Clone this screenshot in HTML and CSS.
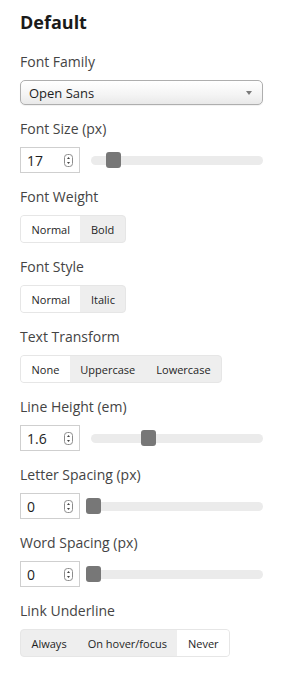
FILE: index.html
```html
<!DOCTYPE html>
<html>
<head>
<meta charset="utf-8">
<link rel="stylesheet" href="styles.css">
</head>
<body>
<h1 class="title">Default</h1>

<div class="field">
  <label class="label">Font Family</label>
  <div class="select">
    <span class="select-text">Open Sans</span>
    <svg class="select-arrow" width="6" height="4" viewBox="0 0 6 4"><path d="M0 0H6L3 4Z" fill="#7a7a7a"/></svg>
  </div>
</div>

<div class="field">
  <label class="label">Font Size (px)</label>
  <div class="slider-row">
    <div class="num"><span class="num-text">17</span><svg class="spin" width="9" height="13" viewBox="0 0 9 13"><rect x="0.5" y="0.5" width="8" height="12" rx="3" fill="#fff" stroke="#8c8c8c"/><path d="M4.5 3L6 5H3Z M4.5 10L6 8H3Z" fill="#444"/></svg></div>
    <div class="track"><div class="thumb" style="left:15px"></div></div>
  </div>
</div>

<div class="field">
  <label class="label">Font Weight</label>
  <div class="seg">
    <span class="seg-item active">Normal</span>
    <span class="seg-item">Bold</span>
  </div>
</div>

<div class="field">
  <label class="label">Font Style</label>
  <div class="seg">
    <span class="seg-item active">Normal</span>
    <span class="seg-item">Italic</span>
  </div>
</div>

<div class="field">
  <label class="label">Text Transform</label>
  <div class="seg">
    <span class="seg-item active">None</span>
    <span class="seg-item">Uppercase</span>
    <span class="seg-item">Lowercase</span>
  </div>
</div>

<div class="field">
  <label class="label">Line Height (em)</label>
  <div class="slider-row">
    <div class="num"><span class="num-text">1.6</span><svg class="spin" width="9" height="13" viewBox="0 0 9 13"><rect x="0.5" y="0.5" width="8" height="12" rx="3" fill="#fff" stroke="#8c8c8c"/><path d="M4.5 3L6 5H3Z M4.5 10L6 8H3Z" fill="#444"/></svg></div>
    <div class="track"><div class="thumb" style="left:50px"></div></div>
  </div>
</div>

<div class="field">
  <label class="label">Letter Spacing (px)</label>
  <div class="slider-row">
    <div class="num"><span class="num-text">0</span><svg class="spin" width="9" height="13" viewBox="0 0 9 13"><rect x="0.5" y="0.5" width="8" height="12" rx="3" fill="#fff" stroke="#8c8c8c"/><path d="M4.5 3L6 5H3Z M4.5 10L6 8H3Z" fill="#444"/></svg></div>
    <div class="track"><div class="thumb" style="left:-5px"></div></div>
  </div>
</div>

<div class="field">
  <label class="label">Word Spacing (px)</label>
  <div class="slider-row">
    <div class="num"><span class="num-text">0</span><svg class="spin" width="9" height="13" viewBox="0 0 9 13"><rect x="0.5" y="0.5" width="8" height="12" rx="3" fill="#fff" stroke="#8c8c8c"/><path d="M4.5 3L6 5H3Z M4.5 10L6 8H3Z" fill="#444"/></svg></div>
    <div class="track"><div class="thumb" style="left:-5px"></div></div>
  </div>
</div>

<div class="field">
  <label class="label">Link Underline</label>
  <div class="seg">
    <span class="seg-item">Always</span>
    <span class="seg-item">On hover/focus</span>
    <span class="seg-item active">Never</span>
  </div>
</div>
</body>
</html>
```

FILE: styles.css
```css
html, body {
  background: #fff;
}
body {
  margin: 0;
  padding: 10px 21px 0 20px;
  font-family: "Open Sans", "DejaVu Sans", sans-serif;
  color: #222;
}
.title {
  margin: 0 0 18px;
  font-size: 18px;
  line-height: 24px;
  font-weight: 700;
  color: #1a1a1a;
}
.field {
  margin-bottom: 14px;
}
.label {
  display: block;
  font-size: 14px;
  line-height: 20px;
  color: #444;
  margin-bottom: 8px;
}
.select {
  display: flex;
  align-items: center;
  justify-content: space-between;
  height: 25px;
  box-sizing: border-box;
  border: 1px solid #aeaeae;
  border-radius: 5px;
  background: linear-gradient(#ffffff, #f4f4f4 60%, #e9e9e9);
  box-shadow: 0 1px 1px rgba(0,0,0,0.06);
  padding: 0 10px 0 8px;
}
.select-text {
  font-size: 13px;
  color: #1e1e1e;
}
.select-arrow {
  display: block;
  margin-top: 1px;
}
.slider-row {
  display: flex;
  align-items: center;
  gap: 11px;
}
.num {
  width: 60px;
  height: 26px;
  box-sizing: border-box;
  border: 1px solid #cfcfcf;
  background: #fff;
  display: flex;
  align-items: center;
  justify-content: space-between;
  padding: 0 6px 0 6px;
  flex: none;
}
.num-text {
  font-size: 14px;
  color: #1e1e1e;
}
.spin {
  display: block;
}
.track {
  position: relative;
  flex: 1;
  height: 9px;
  border-radius: 5px;
  background: #ebebeb;
}
.thumb {
  position: absolute;
  top: 50%;
  width: 15px;
  height: 16px;
  margin-top: -8px;
  border-radius: 3px;
  background: #777;
}
.seg {
  display: inline-flex;
  height: 28px;
  box-sizing: border-box;
  border: 1px solid #e6e6e6;
  border-radius: 4px;
  background: #eeeeee;
  overflow: hidden;
  vertical-align: top;
}
.seg-item {
  display: flex;
  align-items: center;
  padding: 0 10.5px;
  font-size: 11px;
  color: #1e1e1e;
}
.seg-item.active {
  background: #fff;
}
```
